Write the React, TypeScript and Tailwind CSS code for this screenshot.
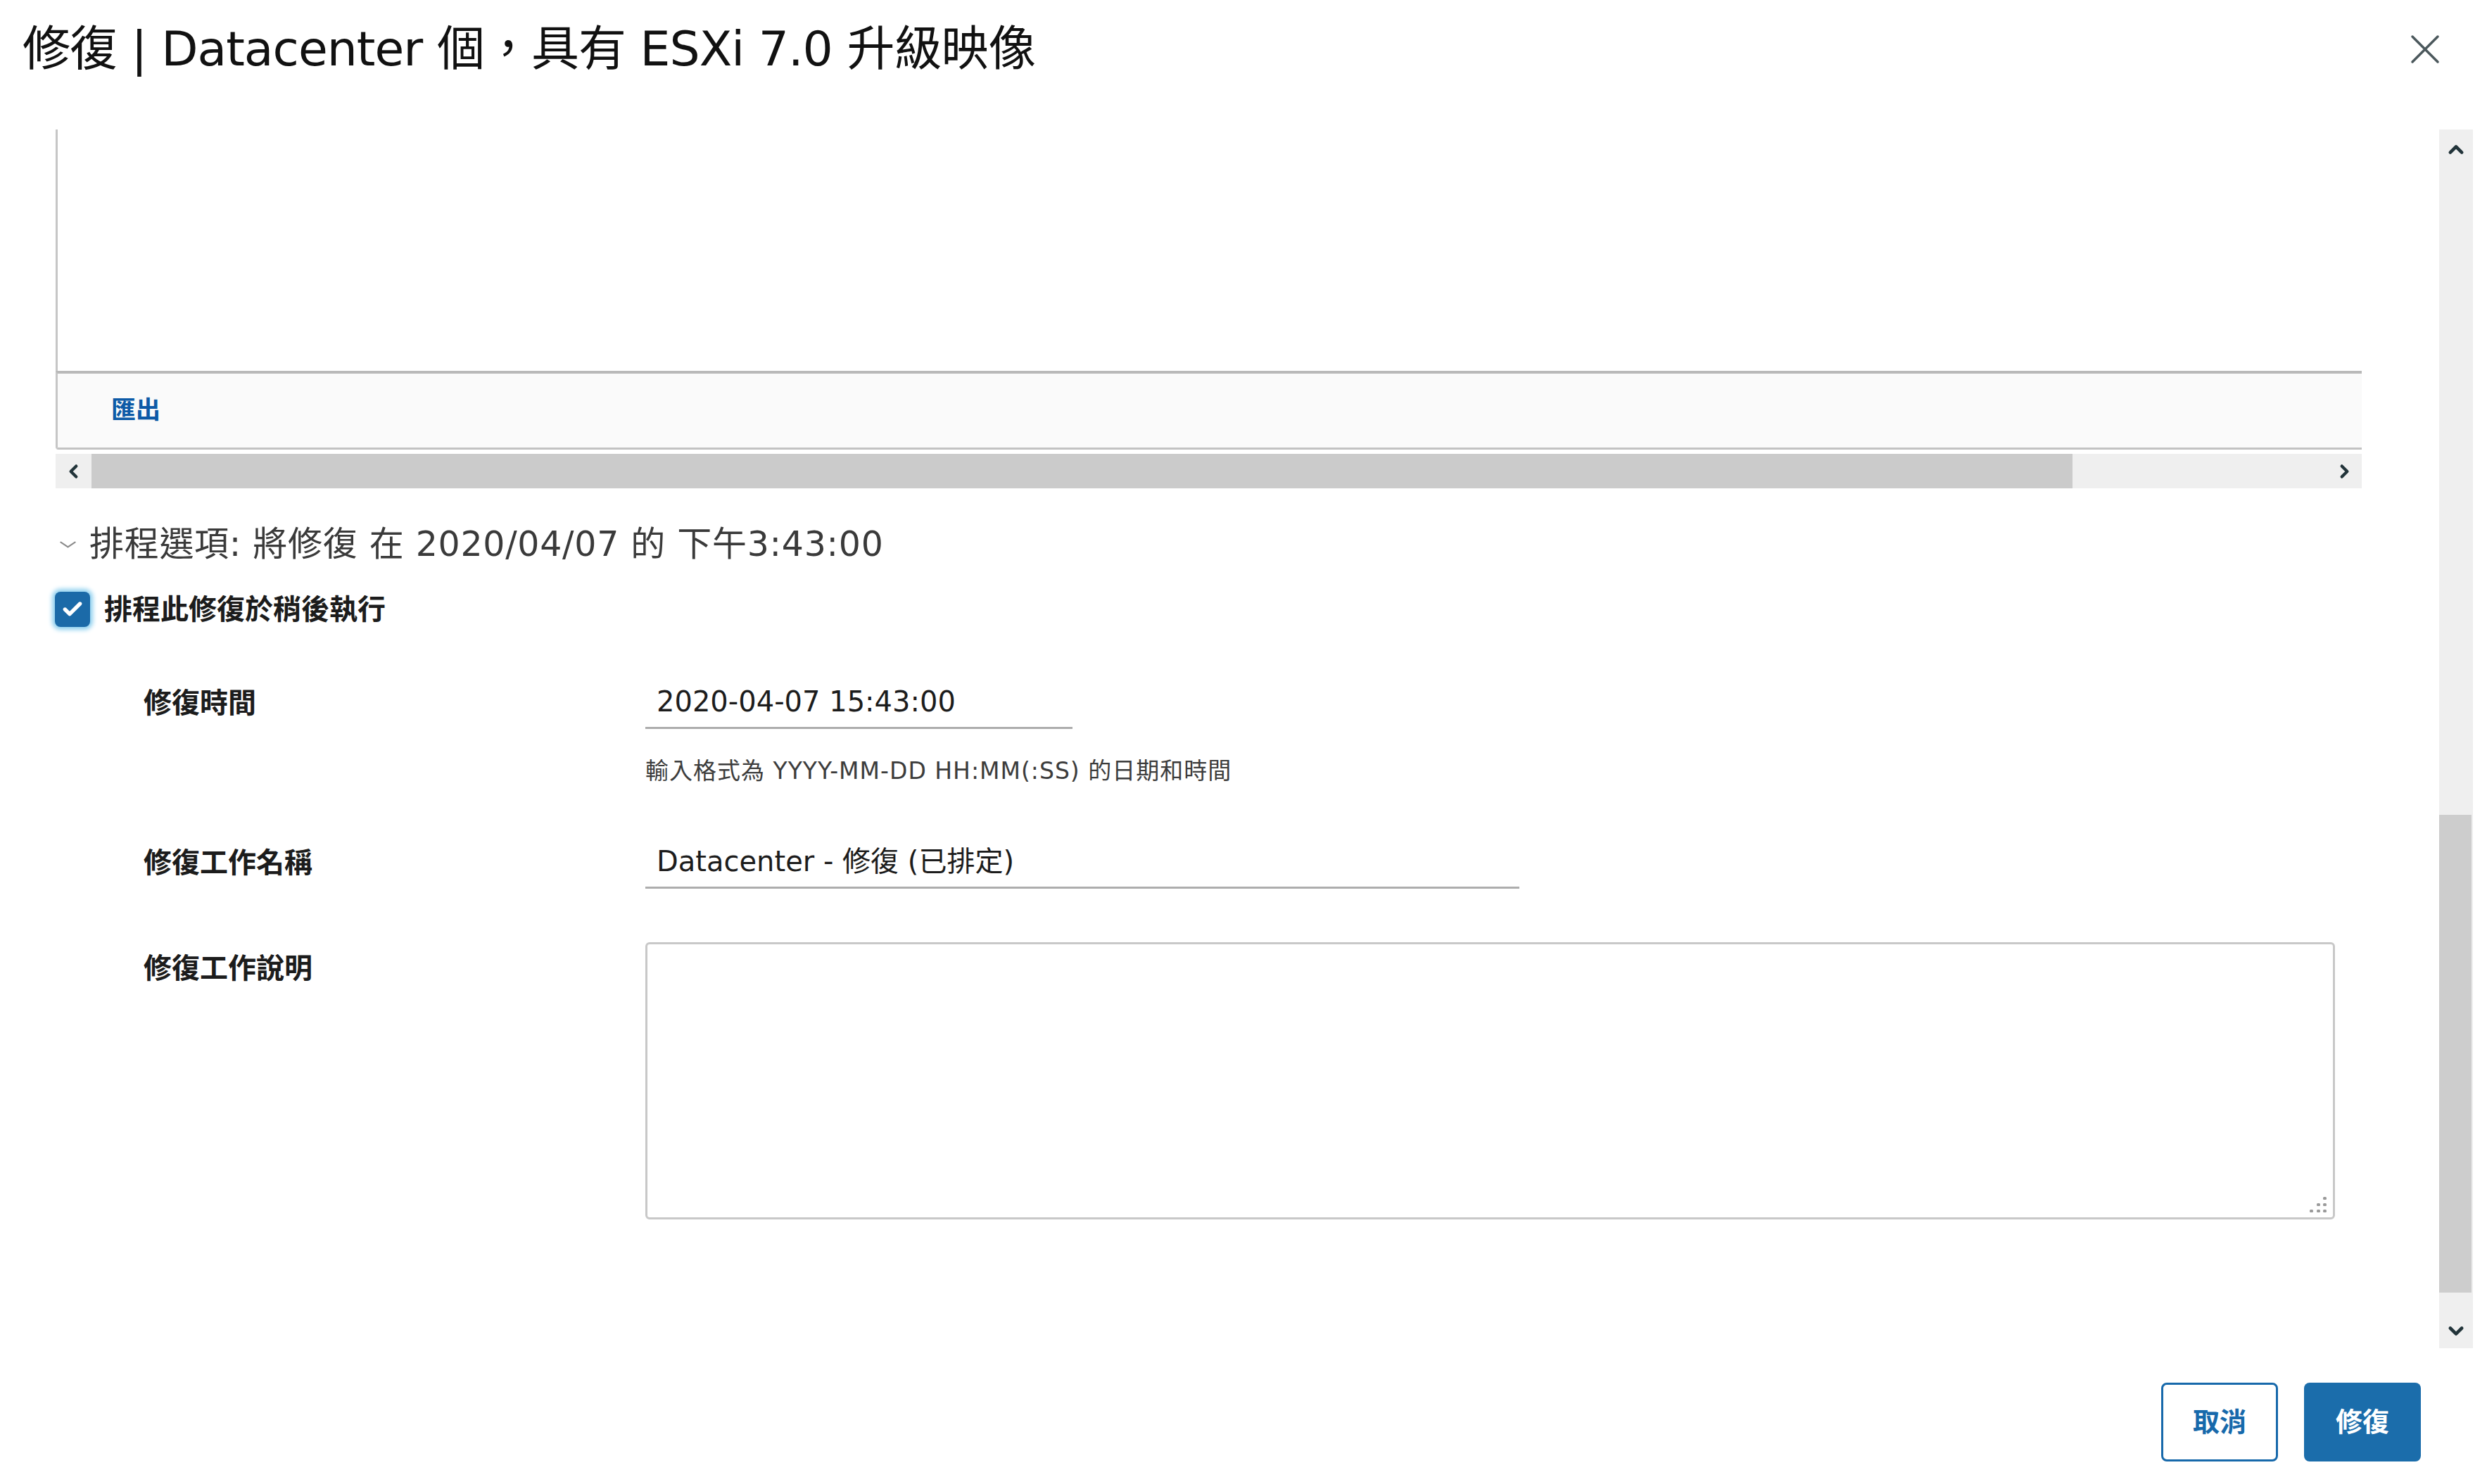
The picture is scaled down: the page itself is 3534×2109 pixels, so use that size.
import { Check } from 'lucide-react'

function Chevron({ dir, className }: { dir: 'up' | 'down' | 'left' | 'right'; className?: string }) {
  const d = {
    up: 'M5 16 L12 9 L19 16',
    down: 'M5 9 L12 16 L19 9',
    left: 'M15 5 L8 12 L15 19',
    right: 'M9 5 L16 12 L9 19',
  }[dir]
  return (
    <svg viewBox="0 0 24 24" className={className} fill="none" stroke="#22343a" strokeWidth={4} strokeLinecap="round" strokeLinejoin="round">
      <path d={d} />
    </svg>
  )
}

function FormRow({ label, children, labelH }: { label: string; children: React.ReactNode; labelH: string }) {
  return (
    <div className="flex items-start">
      <div className={`w-[713px] ml-[125px] flex items-center text-[40px] font-bold text-[#1c1c1c] ${labelH}`}>{label}</div>
      <div className="flex-1">{children}</div>
    </div>
  )
}

export default function App() {
  return (
    <div className="w-[3534px] h-[2109px] bg-white flex flex-col overflow-hidden font-['DejaVu_Sans','Noto_Sans_CJK_TC',sans-serif] text-[#1c1c1c]">
      {/* header */}
      <div className="h-[140px] flex items-center justify-between pl-[32px] pr-[67px]">
        <h1 className="text-[68px] font-normal text-[#111] leading-none tracking-[-1px]">修復 | Datacenter 個，具有 ESXi 7.0 升級映像</h1>
        <svg viewBox="0 0 42 42" className="w-[42px] h-[42px]" stroke="#4b585c" strokeWidth={3.5} strokeLinecap="round">
          <path d="M3 3 L39 39 M39 3 L3 39" />
        </svg>
      </div>

      {/* scroll body */}
      <div className="mt-[44px] h-[1732px] flex">
        <div className="flex-1 pl-[79px] pr-[110px] flex flex-col">
          {/* grid, scrolled */}
          <div className="h-[343px] bg-white border-l-[3px] border-[#c6c6c6]" />
          <div className="h-[112px] bg-[#fafafa] border-l-[3px] border-t-[4px] border-b-[3px] border-t-[#b9b9b9] border-l-[#c6c6c6] border-b-[#c2c2c2] rounded-bl-[4px] flex items-center pl-[76px]">
            <span className="text-[35px] font-bold text-[#0d5aa7]">匯出</span>
          </div>
          <div className="mt-[6px] h-[49px] flex bg-[#efefef]">
            <div className="w-[51px] flex items-center justify-center">
              <Chevron dir="left" className="w-[26px] h-[26px]" />
            </div>
            <div className="w-[2815px] bg-[#cbcbcb]" />
            <div className="flex-1 flex items-center justify-end pr-[12px]">
              <Chevron dir="right" className="w-[26px] h-[26px]" />
            </div>
          </div>

          {/* schedule section */}
          <div className="mt-[50px] h-[60px] flex items-center">
            <svg viewBox="0 0 24 10" className="ml-[6px] w-[23px] h-[10px]" fill="none" stroke="#8a8a8a" strokeWidth={2.2} strokeLinecap="round" strokeLinejoin="round">
              <path d="M1.5 1.5 L12 8.5 L22.5 1.5" />
            </svg>
            <span className="ml-[19px] text-[49px] text-[#3a3a3a] tracking-[0.7px]">排程選項: 將修復 在 2020/04/07 的 下午3:43:00</span>
          </div>

          <div className="mt-[37px] h-[50px] flex items-center -ml-[1px]">
            <div className="w-[50px] h-[50px] rounded-[8px] bg-[#1b6aa8] shadow-[0_0_6px_4px_#8fd0ef] flex items-center justify-center">
              <Check className="w-[32px] h-[32px] text-white" strokeWidth={4} />
            </div>
            <span className="ml-[20px] text-[40px] font-bold text-[#1c1c1c]">排程此修復於稍後執行</span>
          </div>

          <div className="mt-[70px]">
            <FormRow label="修復時間" labelH="h-[75px]">
              <div className="w-[607px] h-[75px] border-b-[3px] border-[#adadad] flex items-center pl-[16px] text-[40px] text-[#1c1c1c]">
                2020-04-07 15:43:00
              </div>
              <div className="mt-[40px] h-[40px] flex items-center text-[33px] text-[#3c3c3c] tracking-[1px]">
                輸入格式為 YYYY-MM-DD HH:MM(:SS) 的日期和時間
              </div>
            </FormRow>
          </div>

          <div className="mt-[72px]">
            <FormRow label="修復工作名稱" labelH="h-[75px]">
              <div className="w-[1242px] h-[75px] border-b-[3px] border-[#adadad] flex items-center pl-[16px] text-[40px] text-[#1c1c1c]">
                Datacenter - 修復 (已排定)
              </div>
            </FormRow>
          </div>

          <div className="mt-[76px]">
            <FormRow label="修復工作說明" labelH="h-[74px]">
              <div className="relative w-[2401px] h-[394px]">
                <textarea className="w-full h-full resize-none border-[3px] border-[#c8c8c8] rounded-[6px] bg-white outline-none" />
                <svg viewBox="0 0 27 24" className="absolute right-[11px] bottom-[9px] w-[27px] h-[24px]" fill="#9a9a9a">
                  <rect x="21" y="1" width="5" height="4" rx="1.5" />
                  <rect x="12" y="10" width="5" height="4" rx="1.5" />
                  <rect x="21" y="10" width="5" height="4" rx="1.5" />
                  <rect x="2" y="19" width="5" height="4" rx="1.5" />
                  <rect x="12" y="19" width="5" height="4" rx="1.5" />
                  <rect x="21" y="19" width="5" height="4" rx="1.5" />
                </svg>
              </div>
            </FormRow>
          </div>
        </div>

        {/* vertical scrollbar */}
        <div className="w-[48px] mr-[20px] bg-[#efefef] flex flex-col">
          <div className="h-[56px] flex items-center justify-center">
            <Chevron dir="up" className="w-[28px] h-[28px]" />
          </div>
          <div className="h-[918px]" />
          <div className="h-[679px] bg-[#cdcdcd] mr-[2px]" />
          <div className="flex-1 flex items-end justify-center pb-[11px]">
            <Chevron dir="down" className="w-[28px] h-[28px]" />
          </div>
        </div>
      </div>

      {/* footer */}
      <div className="mt-[49px] flex justify-end gap-[37px] pr-[94px]">
        <button className="w-[166px] h-[112px] rounded-[8px] border-[3px] border-[#1769ab] bg-white text-[38px] font-bold text-[#1769ab]">取消</button>
        <button className="w-[166px] h-[112px] rounded-[8px] bg-[#1b6dab] text-[38px] font-bold text-white">修復</button>
      </div>
    </div>
  )
}
